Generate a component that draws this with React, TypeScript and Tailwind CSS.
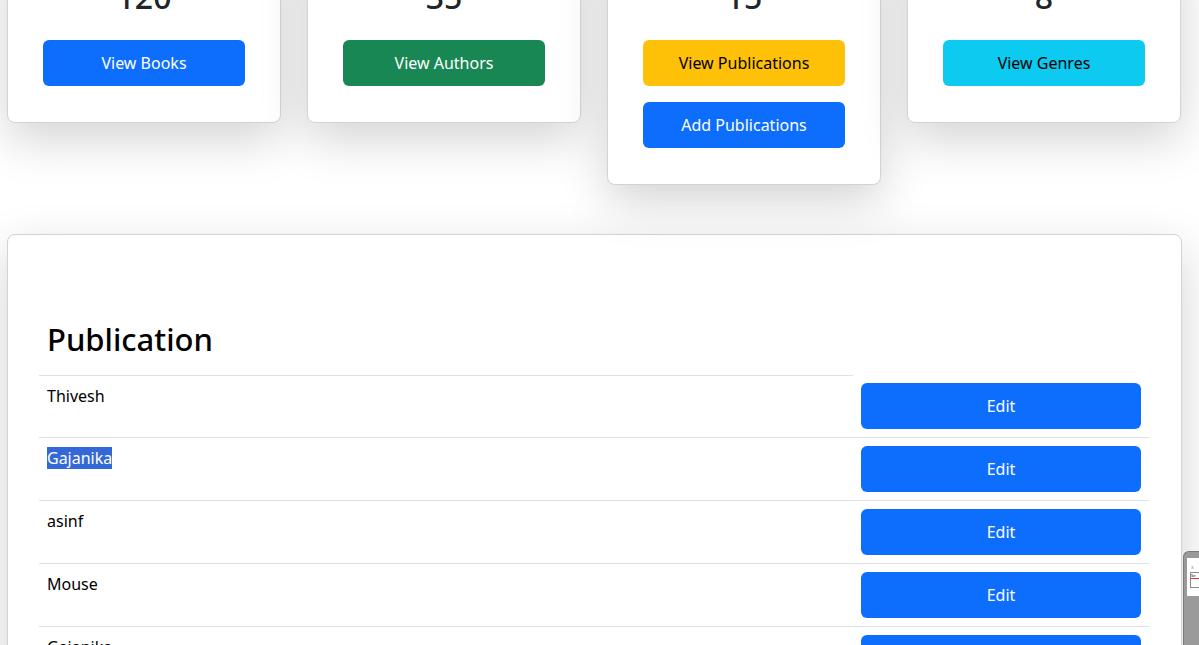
import React from "react";

const font = { fontFamily: '"Noto Sans", "Segoe UI", sans-serif' };

function StatCard({ value, children }: { value: string; children: React.ReactNode }) {
  return (
    <div className="bg-white border border-[#d3d3d3] rounded-[8px] shadow-[0_16px_48px_rgba(0,0,0,0.175)] px-[35px] pt-[38px] pb-[36px] flex flex-col items-stretch">
      <div className="text-center text-[32px] leading-[38px] font-medium text-[#212529] mb-[24px]">{value}</div>
      <div className="flex flex-col gap-[16px]">{children}</div>
    </div>
  );
}

function Btn({ color, children }: { color: string; children: React.ReactNode }) {
  return (
    <button className={`h-[46px] w-full rounded-[6px] text-[16px] leading-[24px] ${color}`}>{children}</button>
  );
}

const rows = ["Thivesh", "Gajanika", "asinf", "Mouse", "Gajanika"];

export default function App() {
  return (
    <div className="relative w-[1199px] h-[645px] overflow-hidden bg-white" style={font}>
      <div className="-mt-[61px] grid grid-cols-4 gap-[26px] pl-[7px] pr-[18px] items-start">
        <StatCard value="120">
          <Btn color="bg-[#0d6efd] text-white">View Books</Btn>
        </StatCard>
        <StatCard value="35">
          <Btn color="bg-[#198754] text-white">View Authors</Btn>
        </StatCard>
        <StatCard value="15">
          <Btn color="bg-[#ffc107] text-black">View Publications</Btn>
          <Btn color="bg-[#0d6efd] text-white">Add Publications</Btn>
        </StatCard>
        <StatCard value="8">
          <Btn color="bg-[#0dcaf0] text-black">View Genres</Btn>
        </StatCard>
      </div>

      <div className="mt-[49px] ml-[7px] w-[1175px] bg-white border border-[#d3d3d3] rounded-[8px] shadow-[0_16px_48px_rgba(0,0,0,0.175)] px-[31px] pt-[85px] pb-[40px]">
        <h2 className="px-[8px] text-[31px] leading-[38px] font-medium text-black mb-[17px]">Publication</h2>
        <div className="flex flex-col w-[1110px] text-[16px] leading-[24px] text-black">
          {rows.map((r, i) => (
            <div key={i} className={`flex ${i > 0 ? "border-t border-[#dee2e6]" : ""}`}>
              <div className={`w-[814px] p-[8px] ${i === 0 ? "border-t border-[#dee2e6]" : ""}`}>
                {i === 1 ? <span className="bg-[#3468d6] text-white">{r}</span> : r}
              </div>
              <div className="flex-1 p-[8px]">
                <button className="w-[280px] h-[46px] rounded-[6px] bg-[#0d6efd] text-white text-[16px]">Edit</button>
              </div>
            </div>
          ))}
        </div>
      </div>

      <div className="absolute left-[1183px] top-[551px] w-[30px] h-[100px] bg-[#9a9a9a] rounded-tl-[6px] border-l border-t border-[#7a7a7a]">
        <div className="absolute left-[3px] top-[6px] w-[30px] h-[38px] bg-white">
          <div className="absolute left-[4px] top-[7px] text-[5px] leading-[5px] text-[#888]">x</div>
          <div className="absolute left-[3px] top-[14px] w-[20px] h-[16px] border border-[#888]">
            <div className="text-[4px] leading-[5px] text-black border-b border-red-500 w-[8px]">Se</div>
          </div>
        </div>
      </div>
    </div>
  );
}
